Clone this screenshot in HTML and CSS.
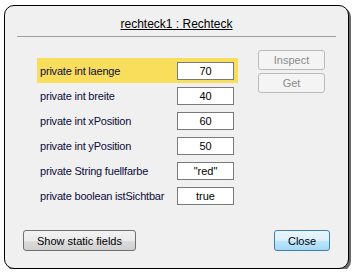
FILE: index.html
```html
<!DOCTYPE html>
<html lang="de">
<head>
    <meta charset="UTF-8">
    <title>rechteck1 : Rechteck</title>
    <link rel="stylesheet" href="styles.css">
</head>
<body>
    <div class="window">
        <h1 class="title">rechteck1 : Rechteck</h1>
        <div class="separator"></div>
        <div class="main">
            <div class="fields">
                <div class="field selected">
                    <span class="label">private int laenge</span>
                    <span class="value">70</span>
                </div>
                <div class="field">
                    <span class="label">private int breite</span>
                    <span class="value">40</span>
                </div>
                <div class="field">
                    <span class="label">private int xPosition</span>
                    <span class="value">60</span>
                </div>
                <div class="field">
                    <span class="label">private int yPosition</span>
                    <span class="value">50</span>
                </div>
                <div class="field">
                    <span class="label">private String fuellfarbe</span>
                    <span class="value">"red"</span>
                </div>
                <div class="field">
                    <span class="label">private boolean istSichtbar</span>
                    <span class="value">true</span>
                </div>
            </div>
            <div class="side">
                <button class="btn" disabled>Inspect</button>
                <button class="btn" disabled>Get</button>
            </div>
        </div>
        <div class="footer">
            <button class="btn static-btn">Show static fields</button>
            <button class="btn close-btn">Close</button>
        </div>
    </div>
</body>
</html>
```

FILE: styles.css
```css
body {
    margin: 0;
    padding: 0;
    background-color: #fff;
    font-family: "Liberation Sans", Arial, sans-serif;
    font-size: 11px;
}
.window {
    margin: 5px 0 0 4px;
    width: 345px;
    height: 264px;
    box-sizing: border-box;
    border: 1px solid #000;
    border-radius: 10px;
    background-color: #f0f0f0;
    box-shadow: 2px 2px 0 #6a6a6a;
    display: flex;
    flex-direction: column;
}
.title {
    margin: 0;
    padding-top: 11px;
    height: 19px;
    text-align: center;
    font-size: 12px;
    font-weight: normal;
    text-decoration: underline;
    color: #000;
}
.separator {
    margin: 0 12px;
    border-top: 1px solid #a0a0a0;
}
.main {
    display: flex;
    gap: 20px;
    padding: 13px 0 0 32px;
}
.fields {
    width: 201px;
    margin-top: 8px;
}
.field {
    height: 25px;
    display: flex;
    align-items: center;
    justify-content: space-between;
    padding: 0 4px 0 3px;
}
.field.selected {
    background-color: #f8de5a;
}
.label {
    color: #0c0c3a;
    letter-spacing: -0.2px;
}
.value {
    width: 55px;
    height: 16px;
    line-height: 16px;
    border: 1px solid #7a7a7a;
    background-color: #fff;
    text-align: center;
    color: #000;
}
.side {
    display: flex;
    flex-direction: column;
    gap: 3px;
}
.btn {
    font-family: "Liberation Sans", Arial, sans-serif;
    font-size: 11px;
    height: 21px;
    padding: 0;
    border-radius: 3px;
    cursor: pointer;
}
.side .btn {
    width: 67px;
    height: 20px;
    border: 1px solid #b8bcbf;
    background-color: #f4f4f4;
    color: #8b8b8b;
}
.footer {
    margin-top: auto;
    display: flex;
    justify-content: space-between;
    padding: 0 18px 17px 18px;
}
.static-btn {
    width: 113px;
    border: 1px solid #707070;
    background: linear-gradient(#f2f2f2 0%, #ebebeb 50%, #dddddd 51%, #cfcfcf 100%);
    color: #000;
}
.close-btn {
    width: 56px;
    border: 1px solid #3c7fb1;
    background: linear-gradient(#eaf6fd 0%, #d9f0fc 50%, #bee6fd 51%, #a7d9f5 100%);
    color: #000;
}
```
